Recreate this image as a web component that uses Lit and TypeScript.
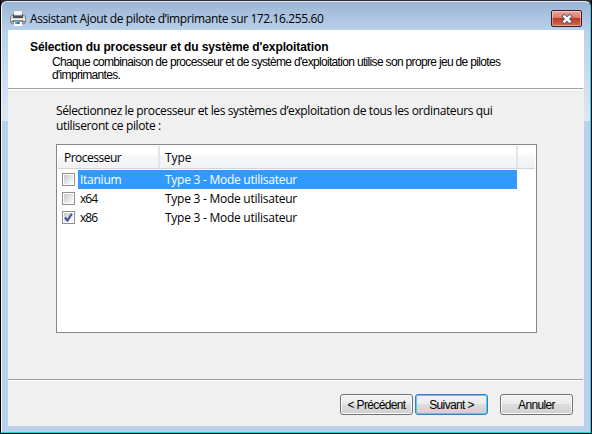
import { LitElement, html, css, svg } from "lit";
import { customElement, state } from "lit/decorators.js";
import { classMap } from "lit/directives/class-map.js";

interface Row {
  name: string;
  type: string;
  checked: boolean;
}

@customElement("app-root")
export class AppRoot extends LitElement {
  static styles = css`
    :host {
      display: block;
      width: 592px;
      height: 434px;
      font: 12px/15px "Open Sans", "Noto Sans", sans-serif;
      color: #000;
      overflow: hidden;
    }
    * { box-sizing: border-box; }
    span, p, h1 { white-space: pre; }
    .window {
      height: 434px;
      border: 1px solid #000;
      border-top-color: #2b2a30;
      background: #30343b;
    }
    .frame {
      height: 432px;
      border: 1px solid #2fc9ea;
      border-left-color: #eef5fc;
      border-top-color: #e4eef8;
      border-radius: 6px 6px 0 0;
      padding: 0 6px 6px;
      background:
        linear-gradient(#9bb5d5, #b9d1ea) 0 0 / 100% 28px no-repeat,
        linear-gradient(#b9d1ea, #dce8f5) 0 28px / 100% 91px no-repeat,
        #b9d1ea;
    }
    .titlebar {
      height: 28px;
      display: flex;
      align-items: flex-start;
      padding: 8px 2px 0 2px;
    }
    .printer { width: 16px; height: 16px; flex: none; }
    .caption { margin: 1px 0 0 4px; letter-spacing: -0.39px; flex: 1; }
    .close {
      width: 31px;
      height: 17px;
      padding: 0;
      border: 1px solid #431a24;
      border-radius: 2px;
      background: linear-gradient(#e9a99b 0, #d9796b 47%, #b83d29 50%, #cf6a50 100%);
      box-shadow: inset 0 0 0 1px #ffffff66;
      display: flex;
      align-items: center;
      justify-content: center;
    }
    .client { background: #f0f0f0; height: 396px; }
    .head {
      height: 58px;
      background: #fff;
      padding: 10px 0 0 22px;
      font: 12px/13px "Liberation Sans", Arial, sans-serif;
    }
    .rule { height: 2px; background: linear-gradient(#a0a0a0 50%, #fff 50%); margin-right: 1px; }
    .head h1 {
      margin: 0;
      font-size: 12px;
      line-height: 15px;
      font-weight: 700;
      letter-spacing: -0.1px;
    }
    .head p { margin: 0 0 0 22px; padding-top: 1px; letter-spacing: -0.67px; }
    .body { height: 289px; padding: 13px 0 0 48px; }
    .body p { margin: 0; letter-spacing: -0.38px; }
    .list {
      width: 481px;
      height: 189px;
      margin-top: 11px;
      border: 1px solid #828790;
      background: #fff;
      padding: 1px;
    }
    .cols {
      display: flex;
      height: 23px;
      margin-bottom: 1px;
      background: linear-gradient(#fff 0 9px, #f7f8fa 9px, #f1f2f4 22px, #d5d5d5 22px);
    }
    .cols span {
      border-right: 2px solid #e3e5e8;
      padding: 4px 0 0 6px;
      height: 22px;
      letter-spacing: -0.5px;
    }
    .cols .c1 { width: 102px; }
    .cols .c2 { width: 358px; padding-left: 5px; letter-spacing: -0.1px; }
    .row { display: flex; height: 19px; align-items: center; width: 459px; }
    .box {
      width: 13px;
      height: 13px;
      margin: 0 3px 0 4px;
      border: 1px solid #8e8f8f;
      background: linear-gradient(135deg, #c3c8ce, #f6f6f6 85%) content-box #f4f4f4;
      padding: 1px;
      display: flex;
    }
    .cells { flex: 1; height: 19px; display: flex; padding: 2px 0 0 2px; letter-spacing: -0.26px; }
    .cells .n { width: 85px; }
    .cells .short { letter-spacing: -1px; }
    .sel .cells { background: #39f; color: #fff; }
    .foot {
      display: flex;
      padding: 13px 0 0 332px;
      font: 12px/14px "Liberation Sans", Arial, sans-serif;
    }
    .btn {
      width: 73px;
      height: 21px;
      padding: 1px 0 0;
      border: 1px solid #707070;
      border-radius: 3px;
      font: inherit;
      color: #000;
      box-shadow: inset 0 0 0 1px #fcfcfc;
      background: linear-gradient(#f2f2f2 0, #ebebeb 50%, #dddddd 50%, #cfcfcf);
      letter-spacing: -0.65px;
      white-space: nowrap;
    }
    .next { margin: 0 12px 0 2px; border-color: #3c7fb1; box-shadow: inset 0 0 0 1px #48d1f5; }
  `;

  @state() private selected = 0;
  @state() private rows: Row[] = [
    { name: "Itanium", type: "Type 3 - Mode utilisateur", checked: false },
    { name: "x64", type: "Type 3 - Mode utilisateur", checked: false },
    { name: "x86", type: "Type 3 - Mode utilisateur", checked: true },
  ];

  private toggle(i: number) {
    this.selected = i;
    this.rows = this.rows.map((r, k) => (k === i ? { ...r, checked: !r.checked } : r));
  }

  private tick = svg`<svg width="9" height="9" viewBox="0 0 9 9"><path d="M1 4.5 L3.5 7.5 L7.8 0.8" fill="none" stroke="#3b4f91" stroke-width="2"/></svg>`;

  render() {
    return html`
      <div class="window"><div class="frame">
        <div class="titlebar">
          <svg class="printer" viewBox="0 0 16 16">
            <path d="M3.5 .5h9v6h-9z" fill="#f4f5f7" stroke="#aeb4bc"/>
            <rect x=".5" y="5.5" width="15" height="8" rx="1.5" fill="#d3d5d8" stroke="#85898f"/>
            <path d="M3 4h1v2h8V4h1v4H3z" fill="#4b4e53"/>
            <path d="M1 9h14v1H1z" fill="#f1f2f3"/>
            <path d="M1 11h14v1.5H1z" fill="#85898f"/>
            <path d="M3 10.5h10V12H3z" fill="#3e4247"/>
            <path d="M4 11.5h8V16H4z" fill="#fff"/>
            <path d="M5 12h2v2H5z" fill="#56b5d8"/>
            <path d="M7 12h2v2H7z" fill="#2a6fae"/>
            <path d="M9 12h1v2H9z" fill="#55ad86"/>
          </svg>
          <span class="caption">Assistant Ajout de pilote d’imprimante sur 172.16.255.60</span>
          <button class="close" aria-label="Fermer">
            <svg width="12" height="10" viewBox="0 0 12 10">
              <path d="M3.3 2.5l5.4 5M8.7 2.5l-5.4 5" stroke="#535666" stroke-width="4.2" stroke-linecap="square"/>
              <path d="M3.3 2.5l5.4 5M8.7 2.5l-5.4 5" stroke="#fff" stroke-width="2.4" stroke-linecap="square"/>
            </svg>
          </button>
        </div>
        <div class="client">
          <div class="head">
            <h1>Sélection du processeur et du système d'exploitation</h1>
            <p>Chaque combinaison de processeur et de système d'exploitation utilise son propre jeu de pilotes
d'imprimantes.</p>
          </div>
          <div class="rule"></div>
          <div class="body">
            <p>Sélectionnez le processeur et les systèmes d’exploitation de tous les ordinateurs qui
utiliseront ce pilote :</p>
            <div class="list">
              <div class="cols"><span class="c1">Processeur</span><span class="c2">Type</span></div>
              ${this.rows.map((r, i) => html`
                <div class=${classMap({ row: true, sel: i === this.selected })} @click=${() => this.toggle(i)}>
                  <div class="box">${r.checked ? this.tick : ""}</div>
                  <div class="cells"><span class=${classMap({ n: true, short: r.name.length < 4 })}>${r.name}</span><span>${r.type}</span></div>
                </div>`)}
            </div>
          </div>
          <div class="rule"></div>
          <div class="foot">
            <button class="btn">&lt; Précédent</button>
            <button class="btn next">Suivant &gt;</button>
            <button class="btn">Annuler</button>
          </div>
        </div>
      </div></div>`;
  }
}
